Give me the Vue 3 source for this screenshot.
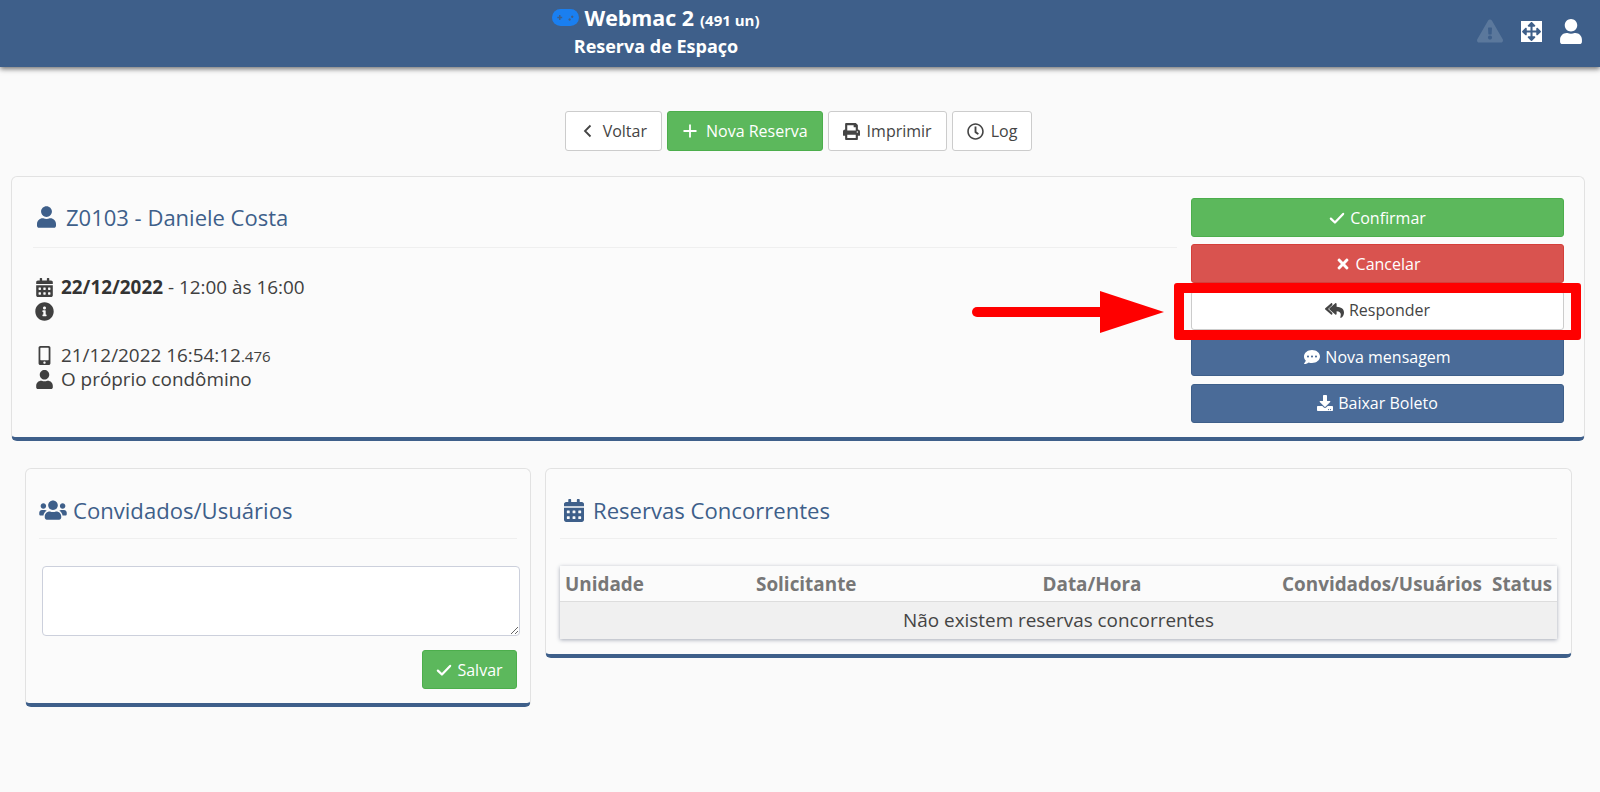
<script setup>
const actions = [
  { label: 'Confirmar', kind: 'green', icon: 'check' },
  { label: 'Cancelar', kind: 'red', icon: 'times' },
  { label: 'Responder', kind: 'white', icon: 'reply' },
  { label: 'Nova mensagem', kind: 'blue', icon: 'comment' },
  { label: 'Baixar Boleto', kind: 'blue', icon: 'download' }
]

const paths = {
  user: 'M224 256c70.7 0 128-57.3 128-128S294.7 0 224 0 96 57.3 96 128s57.3 128 128 128zm89.6 32h-16.7c-22.2 10.2-46.9 16-72.9 16s-50.6-5.8-72.9-16h-16.7C60.2 288 0 348.2 0 422.4V464c0 26.5 21.5 48 48 48h352c26.5 0 48-21.5 48-48v-41.6c0-74.2-60.2-134.4-134.4-134.4z',
  check: 'M60 275L190 400 452 125',
  times: 'M242.72 256l100.07-100.07c12.28-12.28 12.28-32.19 0-44.48l-22.24-22.24c-12.28-12.28-32.19-12.28-44.48 0L176 189.28 75.93 89.21c-12.28-12.28-32.19-12.28-44.48 0L9.21 111.45c-12.28 12.28-12.28 32.19 0 44.48L109.28 256 9.21 356.07c-12.28 12.28-12.28 32.19 0 44.48l22.24 22.24c12.28 12.28 32.2 12.28 44.48 0L176 322.72l100.07 100.07c12.28 12.28 32.2 12.28 44.48 0l22.24-22.24c12.28-12.28 12.28-32.19 0-44.48L242.72 256z',
  reply: 'M136.3 189.8L312.3 37.9C327.7 24.5 352 35.3 352 56v82.8c129.2 10.2 224 52.2 224 183.5 0 61.4-39.6 122.3-83.3 154.1-13.7 9.9-33.1-2.5-28.1-18.6 38.5-123.2-3.9-169.5-112.6-182v84.2c0 20.7-24.3 31.5-39.7 18.2L136.3 226.2c-11.1-9.6-11.1-26.8 0-36.4zM8.3 226.2l176 152c15.4 13.3 39.7 2.5 39.7-18.2v-30L96 208 224 86.2V56c0-20.7-24.3-31.5-39.7-18.2l-176 152c-11.1 9.6-11.1 26.8 0 36.4z',
  comment: 'M256 32C114.6 32 0 125.1 0 240c0 49.6 21.4 95 57 130.7C44.5 421.1 2.7 466 2.2 466.5c-2.2 2.3-2.8 5.7-1.5 8.7S4.8 480 8 480c66.3 0 116-31.8 140.6-51.4 32.7 12.3 69 19.4 107.4 19.4 141.4 0 256-93.1 256-208S397.4 32 256 32zM128 272c-17.7 0-32-14.3-32-32s14.3-32 32-32 32 14.3 32 32-14.3 32-32 32zm128 0c-17.7 0-32-14.3-32-32s14.3-32 32-32 32 14.3 32 32-14.3 32-32 32zm128 0c-17.7 0-32-14.3-32-32s14.3-32 32-32 32 14.3 32 32-14.3 32-32 32z',
  download: 'M216 0h80c13.3 0 24 10.7 24 24v168h87.7c17.8 0 26.7 21.5 14.1 34.1L269.7 378.3c-7.5 7.5-19.8 7.5-27.3 0L90.1 226.1c-12.6-12.6-3.7-34.1 14.1-34.1H192V24c0-13.3 10.7-24 24-24zm296 376v112c0 13.3-10.7 24-24 24H24c-13.3 0-24-10.7-24-24V376c0-13.3 10.7-24 24-24h146.7l49 49c20.1 20.1 52.5 20.1 72.6 0l49-49H488c13.3 0 24 10.7 24 24zm-124 88c0-11-9-20-20-20s-20 9-20 20 9 20 20 20 20-9 20-20zm64 0c0-11-9-20-20-20s-20 9-20 20 9 20 20 20 20-9 20-20z',
  calendar: 'M0 464c0 26.5 21.5 48 48 48h352c26.5 0 48-21.5 48-48V192H0v272zm320-196c0-6.6 5.4-12 12-12h40c6.6 0 12 5.4 12 12v40c0 6.6-5.4 12-12 12h-40c-6.6 0-12-5.4-12-12v-40zm0 128c0-6.6 5.4-12 12-12h40c6.6 0 12 5.4 12 12v40c0 6.6-5.4 12-12 12h-40c-6.6 0-12-5.4-12-12v-40zM192 268c0-6.6 5.4-12 12-12h40c6.6 0 12 5.4 12 12v40c0 6.6-5.4 12-12 12h-40c-6.6 0-12-5.4-12-12v-40zm0 128c0-6.6 5.4-12 12-12h40c6.6 0 12 5.4 12 12v40c0 6.6-5.4 12-12 12h-40c-6.6 0-12-5.4-12-12v-40zM64 268c0-6.6 5.4-12 12-12h40c6.6 0 12 5.4 12 12v40c0 6.6-5.4 12-12 12H76c-6.6 0-12-5.4-12-12v-40zm0 128c0-6.6 5.4-12 12-12h40c6.6 0 12 5.4 12 12v40c0 6.6-5.4 12-12 12H76c-6.6 0-12-5.4-12-12v-40zM400 64h-48V16c0-8.8-7.2-16-16-16h-32c-8.8 0-16 7.2-16 16v48H160V16c0-8.8-7.2-16-16-16h-32c-8.8 0-16 7.2-16 16v48H48C21.5 64 0 85.5 0 112v48h448v-48c0-26.5-21.5-48-48-48z',
  info: 'M256 8C119.043 8 8 119.083 8 256c0 136.997 111.043 248 248 248s248-111.003 248-248C504 119.083 392.957 8 256 8zm0 110c23.196 0 42 18.804 42 42s-18.804 42-42 42-42-18.804-42-42 18.804-42 42-42zm56 254c0 6.627-5.373 12-12 12h-88c-6.627 0-12-5.373-12-12v-24c0-6.627 5.373-12 12-12h12v-64h-12c-6.627 0-12-5.373-12-12v-24c0-6.627 5.373-12 12-12h64c6.627 0 12 5.373 12 12v100h12c6.627 0 12 5.373 12 12v24z',
  mobile: 'M272 0H48C21.5 0 0 21.5 0 48v416c0 26.5 21.5 48 48 48h224c26.5 0 48-21.5 48-48V48c0-26.5-21.5-48-48-48zM160 480c-17.7 0-32-14.3-32-32s14.3-32 32-32 32 14.3 32 32-14.3 32-32 32zm112-108c0 6.6-5.4 12-12 12H60c-6.6 0-12-5.4-12-12V60c0-6.6 5.4-12 12-12h200c6.6 0 12 5.4 12 12v312z',
  users: 'M96 224c35.3 0 64-28.7 64-64s-28.7-64-64-64-64 28.7-64 64 28.7 64 64 64zm448 0c35.3 0 64-28.7 64-64s-28.7-64-64-64-64 28.7-64 64 28.7 64 64 64zm32 32h-64c-17.6 0-33.5 7.1-45.1 18.6 40.3 22.1 68.9 62 75.1 109.4h66c17.7 0 32-14.3 32-32v-32c0-35.3-28.7-64-64-64zm-256 0c61.9 0 112-50.1 112-112S381.9 32 320 32 208 82.1 208 144s50.1 112 112 112zm76.8 32h-8.3c-20.8 10-43.9 16-68.5 16s-47.6-6-68.5-16h-8.3C179.6 288 128 339.6 128 403.2V432c0 26.5 21.5 48 48 48h288c26.5 0 48-21.5 48-48v-28.8c0-63.6-51.6-115.2-115.2-115.2zm-223.7-13.4C161.5 263.1 145.6 256 128 256H64c-35.3 0-64 28.7-64 64v32c0 17.7 14.3 32 32 32h65.9c6.3-47.4 34.9-87.3 75.2-109.4z',
  print: 'M448 192V77.25c0-8.49-3.37-16.62-9.37-22.63L393.37 9.37c-6-6-14.14-9.37-22.63-9.37H96C78.33 0 64 14.33 64 32v160c-35.35 0-64 28.65-64 64v112c0 8.84 7.16 16 16 16h48v96c0 17.67 14.33 32 32 32h320c17.67 0 32-14.33 32-32v-96h48c8.84 0 16-7.16 16-16V256c0-35.35-28.65-64-64-64zm-64 256H128v-96h256v96zm0-224H128V64h192v48c0 8.84 7.16 16 16 16h48v96zm48 72c-13.25 0-24-10.75-24-24 0-13.26 10.75-24 24-24s24 10.74 24 24c0 13.25-10.75 24-24 24z',
  clock: 'M256 8C119 8 8 119 8 256s111 248 248 248 248-111 248-248S393 8 256 8zm0 448c-110.5 0-200-89.5-200-200S145.5 56 256 56s200 89.5 200 200-89.5 200-200 200zm61.8-104.4l-84.9-61.7c-3.1-2.3-4.9-5.9-4.9-9.7V116c0-6.6 5.4-12 12-12h32c6.6 0 12 5.4 12 12v141.7l66.8 48.6c5.4 3.9 6.5 11.4 2.6 16.8L334.6 349c-3.9 5.3-11.4 6.5-16.8 2.6z',
  warning: 'M569.517 440.013C587.975 472.007 564.806 512 527.94 512H48.054c-36.937 0-59.999-40.055-41.577-71.987L246.423 23.985c18.467-32.009 64.72-31.951 83.154 0l239.94 416.028zM288 354c-25.405 0-46 20.595-46 46s20.595 46 46 46 46-20.595 46-46-20.595-46-46-46zm-43.673-165.346l7.418 136c.347 6.364 5.609 11.346 11.982 11.346h48.546c6.373 0 11.635-4.982 11.982-11.346l7.418-136c.375-6.874-5.098-12.654-11.982-12.654h-63.383c-6.884 0-12.356 5.78-11.981 12.654z',
  arrows: 'M352.201 425.775l-79.196 79.196c-9.373 9.373-24.568 9.373-33.941 0l-79.196-79.196c-15.119-15.119-4.411-40.971 16.971-40.97h51.162L228 284H127.196v51.162c0 21.382-25.851 32.09-40.971 16.971L7.029 272.937c-9.373-9.373-9.373-24.569 0-33.941L86.225 159.8c15.119-15.119 40.971-4.411 40.971 16.971V228H228V127.196h-51.23c-21.382 0-32.09-25.851-16.971-40.971l79.196-79.196c9.373-9.373 24.568-9.373 33.941 0l79.196 79.196c15.119 15.119 4.411 40.971-16.971 40.971h-51.162V228h100.804v-51.162c0-21.382 25.851-32.09 40.97-16.971l79.196 79.196c9.373 9.373 9.373 24.569 0 33.941L425.773 352.2c-15.119 15.119-40.97 4.411-40.97-16.971V284H284v100.804h51.23c21.382 0 32.09 25.851 16.971 40.971z'
}

const columns = [
  { label: 'Unidade', width: '191px' },
  { label: 'Solicitante', width: '156px' },
  { label: 'Data/Hora', width: '370px', center: true },
  { label: 'Convidados/Usuários', width: '210px' },
  { label: 'Status', width: '70px' }
]

function iconBox(name) {
  if (name === 'times') return '0 0 352 512'
  if (name === 'reply') return '0 0 576 512'
  return '0 0 512 512'
}
</script>

<template>
  <div class="page">
    <header class="topbar">
      <div class="brand">
        <div class="brand-line">
          <svg class="gamepad" viewBox="0 0 27 17">
            <rect width="27" height="17" rx="8.5" fill="#1a7ff0" />
            <path class="pad-mark" d="M7 6h1.5v1.7h1.7v1.5H8.5v1.7H7V9.2H5.3V7.7H7zM19 7.8a1.2 1.2 0 1 0 0-.1zM16.4 10.6a1.2 1.2 0 1 0 0-.1z" />
          </svg>
          <span class="brand-name">Webmac 2</span>
          <span class="brand-count">(491 un)</span>
        </div>
        <div class="brand-sub">Reserva de Espaço</div>
      </div>
      <div class="top-icons">
        <svg class="warn" viewBox="0 0 576 512"><path :d="paths.warning" /></svg>
        <svg class="expand" viewBox="0 0 512 512">
          <rect width="512" height="512" fill="#fff" />
          <path class="expand-arrows" :d="paths.arrows" transform="translate(26 26) scale(0.9)" />
        </svg>
        <svg class="top-user" viewBox="0 0 448 512"><path :d="paths.user" /></svg>
      </div>
    </header>

    <div class="toolbar">
      <button class="tbtn">
        <svg class="ic-line" viewBox="0 0 16 16"><path d="M10.5 2.5L5 8l5.5 5.5" /></svg>
        <span>Voltar</span>
      </button>
      <button class="tbtn tgreen">
        <svg class="ic-line" viewBox="0 0 16 16"><path d="M8 1.5v13M1.5 8h13" /></svg>
        <span class="gap-l">Nova Reserva</span>
      </button>
      <button class="tbtn">
        <svg class="ic-t" viewBox="0 0 512 512"><path :d="paths.print" /></svg>
        <span>Imprimir</span>
      </button>
      <button class="tbtn">
        <svg class="ic-t" viewBox="0 0 512 512"><path :d="paths.clock" /></svg>
        <span>Log</span>
      </button>
    </div>

    <section class="card main-card">
      <div class="main-left">
        <h2 class="card-title">
          <svg class="title-user" viewBox="0 0 448 512"><path :d="paths.user" /></svg>
          Z0103 - Daniele Costa
        </h2>
        <div class="info">
          <div class="line">
            <svg class="li" viewBox="0 0 448 512"><path :d="paths.calendar" /></svg>
            <span><b>22/12/2022</b> - 12:00 às 16:00</span>
          </div>
          <div class="line">
            <svg class="li" viewBox="0 0 512 512"><path :d="paths.info" /></svg>
          </div>
        </div>
        <div class="info second">
          <div class="line">
            <svg class="li" viewBox="0 0 320 512"><path :d="paths.mobile" /></svg>
            <span>21/12/2022 16:54:12<small>.476</small></span>
          </div>
          <div class="line">
            <svg class="li" viewBox="0 0 448 512"><path :d="paths.user" /></svg>
            <span>O próprio condômino</span>
          </div>
        </div>
      </div>
      <div class="actions">
        <button v-for="a in actions" :key="a.label" class="abtn" :class="a.kind">
          <svg class="ic" :class="{ stroked: a.icon === 'check', wide: a.icon === 'reply' }" :viewBox="iconBox(a.icon)">
            <path :d="paths[a.icon]" />
          </svg>
          <span>{{ a.label }}</span>
        </button>
      </div>
    </section>

    <div class="bottom">
      <section class="card guests">
        <h2 class="card-title small">
          <svg class="title-users" viewBox="0 0 640 512"><path :d="paths.users" /></svg>
          Convidados/Usuários
        </h2>
        <textarea class="guest-input"></textarea>
        <div class="save-row">
          <button class="abtn green save">
            <svg class="ic stroked" viewBox="0 0 512 512"><path :d="paths.check" /></svg>
            <span>Salvar</span>
          </button>
        </div>
      </section>

      <section class="card concurrent">
        <h2 class="card-title small">
          <svg class="title-cal" viewBox="0 0 448 512"><path :d="paths.calendar" /></svg>
          Reservas Concorrentes
        </h2>
        <table class="tbl">
          <colgroup>
            <col v-for="c in columns" :key="c.label" :style="{ width: c.width }" />
          </colgroup>
          <thead>
            <tr>
              <th v-for="c in columns" :key="c.label" :class="{ center: c.center }">{{ c.label }}</th>
            </tr>
          </thead>
          <tbody>
            <tr>
              <td colspan="5">Não existem reservas concorrentes</td>
            </tr>
          </tbody>
        </table>
      </section>
    </div>

    <!-- destaque vermelho por cima da tela -->
    <div class="mark-box"></div>
    <svg class="mark-arrow" viewBox="0 0 192 44" width="192" height="44">
      <path d="M5 21h130" stroke="#ff0000" stroke-width="10" stroke-linecap="round" />
      <path d="M128 0l64 21-64 21z" />
    </svg>
  </div>
</template>

<style>
html,
body {
  margin: 0;
  background: #fafafa;
}
</style>

<style scoped>
.page {
  position: relative;
  height: 792px;
  overflow: hidden;
  background: #fafafa;
  font-family: 'Open Sans', sans-serif;
  color: #333;
}

svg path {
  fill: currentColor;
}

.topbar {
  display: flex;
  height: 67px;
  background: #3e5f8a;
  color: #fff;
  box-shadow: 0 2px 5px rgba(0, 0, 0, 0.55);
}
.brand {
  width: 1312px;
  text-align: center;
  font-weight: 700;
}
.brand-line {
  display: flex;
  justify-content: center;
  align-items: center;
  height: 35px;
}
.gamepad {
  width: 27px;
  height: 17px;
  margin-right: 5px;
}
.gamepad .pad-mark {
  fill: #3e5f8a;
}
.brand-name {
  font-size: 21.4px;
}
.brand-count {
  font-size: 15px;
  margin-left: 6px;
  margin-top: 4px;
}
.brand-sub {
  font-size: 18px;
  line-height: 22px;
}
.top-icons {
  flex: 1;
  display: flex;
  justify-content: flex-end;
  align-items: center;
  height: 62px;
  padding-right: 18px;
  gap: 17px;
}
.warn {
  width: 26px;
  height: 26px;
  color: #5b789c;
}
.expand {
  width: 23px;
  height: 21px;
}
.expand .expand-arrows {
  fill: #3e5f8a;
}
.top-user {
  width: 22px;
  height: 25px;
}

.toolbar {
  display: flex;
  justify-content: center;
  gap: 5px;
  margin-top: 44px;
  padding-right: 3px;
}
button {
  font-family: inherit;
  cursor: pointer;
}
.tbtn {
  display: flex;
  align-items: center;
  gap: 7px;
  height: 40px;
  padding: 0 14px;
  border: 1px solid #ccc;
  border-radius: 3px;
  background: #fff;
  color: #444;
  font-size: 16px;
}
.tgreen {
  background: #5cb85c;
  border-color: #4cae4c;
  color: #fff;
}
.gap-l {
  margin-left: 1px;
}
.ic {
  width: 16px;
  height: 16px;
  flex: none;
}
.ic.wide {
  width: 19px;
  height: 17px;
}
.ic-t {
  width: 17px;
  height: 17px;
  flex: none;
}
.ic.stroked path {
  fill: none;
  stroke: currentColor;
  stroke-width: 72;
  stroke-linecap: round;
  stroke-linejoin: round;
}
.ic-line {
  width: 16px;
  height: 16px;
  flex: none;
}
.ic-line path {
  fill: none;
  stroke: currentColor;
  stroke-width: 1.8;
}

.card {
  box-sizing: border-box;
  background: #fbfbfb;
  border: 1px solid #e2e2e2;
  border-bottom: 4px solid #3e5f8a;
  border-radius: 6px;
}
.main-card {
  display: flex;
  justify-content: space-between;
  height: 265px;
  margin: 25px 15px 0 11px;
  padding: 21px 20px 0 21px;
}
.main-left {
  width: 1144px;
}
.card-title {
  display: flex;
  align-items: center;
  box-sizing: border-box;
  margin: 0;
  height: 50px;
  padding: 0 0 11px 4px;
  border-bottom: 1px solid #efefef;
  font-size: 22px;
  font-weight: 400;
  color: #3e5f8a;
}
.title-user {
  width: 19px;
  height: 22px;
  margin-right: 10px;
}
.info {
  margin-top: 27px;
  font-size: 18.9px;
  line-height: 24px;
}
.info.second {
  margin-top: 20px;
}
.line {
  display: flex;
  align-items: center;
  height: 24px;
  padding-left: 2px;
  color: #404040;
}
.li {
  width: 19px;
  height: 19px;
  margin-right: 7px;
  flex: none;
}
b {
  color: #333;
}
small {
  font-size: 15px;
}
.actions {
  display: flex;
  flex-direction: column;
  gap: 7.4px;
  width: 373px;
}
.abtn {
  display: flex;
  align-items: center;
  justify-content: center;
  gap: 5px;
  height: 39px;
  flex: none;
  border: 1px solid transparent;
  border-radius: 3px;
  font-size: 16px;
  color: #fff;
}
.abtn.green {
  background: #5cb85c;
  border-color: #4cae4c;
}
.abtn.red {
  background: #d9534f;
  border-color: #d43f3a;
}
.abtn.white {
  background: #fff;
  border-color: #ccc;
  color: #444;
}
.abtn.blue {
  background: #4a6b98;
  border-color: #3e5f8a;
}

.bottom {
  display: flex;
  align-items: flex-start;
  gap: 14px;
  margin: 27px 28px 0 25px;
}
.guests {
  width: 506px;
  height: 239px;
  padding: 20px 13px 0 13px;
}
.concurrent {
  flex: 1;
  height: 190px;
  padding: 20px 14px 0 14px;
}
.card-title.small {
  height: 50px;
  padding: 0 0 7px;
  font-size: 22.1px;
}
.title-users {
  width: 28px;
  height: 22px;
  margin-right: 6px;
}
.title-cal {
  width: 20px;
  height: 23px;
  margin: 0 9px 0 4px;
}
.guest-input {
  display: block;
  box-sizing: border-box;
  width: 478px;
  height: 70px;
  margin: 27px 0 0 3px;
  border: 1px solid #ccd0dc;
  border-radius: 4px;
  background: #fff;
}
.save-row {
  display: flex;
  justify-content: flex-end;
  margin-top: 14px;
}
.save {
  width: 95px;
}

.tbl {
  width: 997px;
  margin-top: 27px;
  table-layout: fixed;
  border-collapse: collapse;
  font-size: 18.9px;
  box-shadow: 0 1px 4px rgba(60, 70, 100, 0.45);
}
th {
  height: 35px;
  padding: 0 5px 0 5px;
  text-align: left;
  font-weight: 700;
  color: #777;
  white-space: nowrap;
  border-bottom: 1px solid #ddd;
}
th.center {
  text-align: center;
}
td {
  height: 36px;
  padding: 0 0 1px;
  text-align: center;
  background: #f0f0f0;
  color: #444;
}

.mark-box {
  position: absolute;
  left: 1174px;
  top: 283px;
  box-sizing: border-box;
  width: 407px;
  height: 57px;
  border: 10px solid #ff0000;
  border-radius: 3px;
}
.mark-arrow {
  position: absolute;
  left: 972px;
  top: 291px;
  color: #ff0000;
}
</style>
